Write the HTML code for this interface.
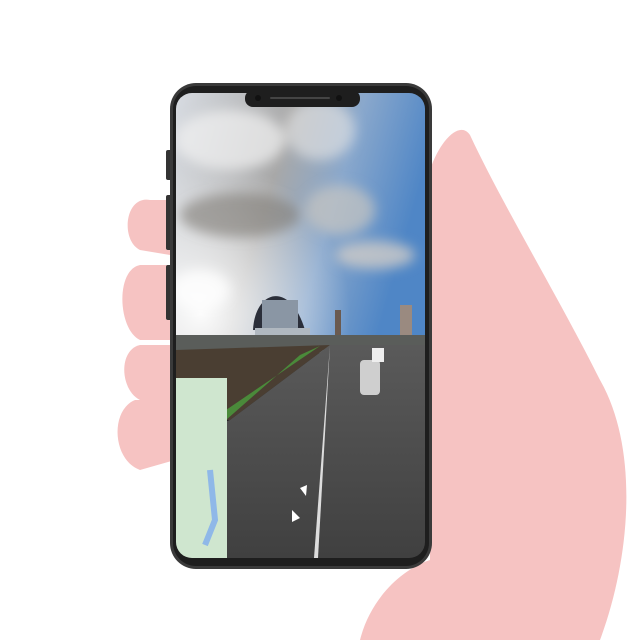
<!DOCTYPE html>
<html><head><style>
body{margin:0;width:640px;height:640px;background:#fff;overflow:hidden;font-family:"Liberation Sans",sans-serif}
</style></head><body>
<svg width="640" height="640" viewBox="0 0 640 640" style="position:absolute;left:0;top:0">
<defs>
<linearGradient id="sky" x1="0" y1="0" x2="1" y2="0.3">
<stop offset="0" stop-color="#d8dce2"/><stop offset="0.45" stop-color="#a8a8a8"/><stop offset="0.7" stop-color="#8aa8cc"/><stop offset="1" stop-color="#4f86c6"/></linearGradient>
<radialGradient id="sun" cx="0.1" cy="0.85" r="0.6"><stop offset="0" stop-color="#fff" stop-opacity="0.95"/><stop offset="1" stop-color="#fff" stop-opacity="0"/></radialGradient>
<linearGradient id="road" x1="0" y1="0" x2="0" y2="1"><stop offset="0" stop-color="#5a5a5a"/><stop offset="1" stop-color="#404040"/></linearGradient>
<filter id="bl"><feGaussianBlur stdDeviation="6"/></filter>
</defs>
<path d="M430 170 C440 140 460 120 470 135 C500 200 560 300 600 380 C640 450 630 560 600 640 L360 640 C370 600 400 570 430 560 Z" fill="#f6c3c2"/>
<path d="M150 200 C125 195 120 240 140 250 L170 255 L170 200 Z" fill="#f6c3c2"/>
<path d="M140 265 C115 270 118 330 140 340 L172 340 L172 265 Z" fill="#f6c3c2"/>
<path d="M140 345 C118 350 120 390 140 400 L172 400 L172 345 Z" fill="#f6c3c2"/>
<path d="M135 400 C110 410 112 460 140 470 L175 460 L175 400 Z" fill="#f6c3c2"/>
<rect x="166" y="150" width="6" height="30" rx="2" fill="#333"/>
<rect x="166" y="195" width="6" height="55" rx="2" fill="#333"/>
<rect x="166" y="265" width="6" height="55" rx="2" fill="#333"/>
<rect x="170" y="83" width="262" height="486" rx="26" fill="#3a3a3a"/>
<rect x="173" y="86" width="256" height="480" rx="23" fill="#1e1e1e"/>
<clipPath id="scr"><rect x="176" y="93" width="249" height="465" rx="16"/></clipPath>
<g clip-path="url(#scr)">
<rect x="176" y="93" width="249" height="260" fill="url(#sky)"/>
<rect x="176" y="93" width="249" height="260" fill="url(#sun)"/>
<g filter="url(#bl)">
<ellipse cx="230" cy="140" rx="55" ry="30" fill="#f2f2f2" opacity="0.7"/>
<ellipse cx="320" cy="130" rx="35" ry="30" fill="#e8e8e8" opacity="0.6"/>
<ellipse cx="240" cy="215" rx="60" ry="22" fill="#7e7a74" opacity="0.6"/>
<ellipse cx="340" cy="210" rx="35" ry="25" fill="#c8c6c2" opacity="0.7"/>
<ellipse cx="375" cy="255" rx="40" ry="14" fill="#d0ccc8" opacity="0.8"/>
<ellipse cx="200" cy="290" rx="30" ry="20" fill="#fff" opacity="0.8"/>
</g>
<path d="M253 330 C255 290 290 280 305 330 Z" fill="#2b2f3a"/>
<rect x="262" y="300" width="36" height="32" fill="#8a96a4"/>
<rect x="255" y="328" width="55" height="10" fill="#b0b8c0"/>
<rect x="335" y="310" width="6" height="25" fill="#6a5a50"/>
<rect x="400" y="305" width="12" height="30" fill="#9a8a80"/>
<rect x="176" y="335" width="249" height="15" fill="#5a5d5a"/>
<polygon points="176,350 330,345 230,420 176,420" fill="#4a3e32"/>
<polygon points="230,420 330,345 425,345 425,558 176,558 176,440" fill="url(#road)"/>
<polygon points="226,410 320,346 300,355 226,420" fill="#4a8a3a"/>
<polygon points="330,345 318,558 314,558" fill="#ddd"/>
<rect x="360" y="360" width="20" height="35" rx="4" fill="#cfcfcf"/>
<rect x="372" y="348" width="12" height="14" fill="#eee"/>
<rect x="176" y="378" width="51" height="180" fill="#cfe6cf"/>
<path d="M210 470 L215 520 L205 545" stroke="#8fb8e8" stroke-width="6" fill="none"/>
<polygon points="300,488 307,485 306,496" fill="#fff"/>
<polygon points="292,510 300,518 292,522" fill="#fff"/>
</g>
<rect x="245" y="90" width="115" height="17" rx="8" fill="#1e1e1e"/>
<rect x="270" y="97" width="60" height="2" rx="1" fill="#444"/>
<circle cx="258" cy="98" r="3" fill="#111"/><circle cx="339" cy="98" r="3" fill="#111"/>
</svg>
</body></html>
